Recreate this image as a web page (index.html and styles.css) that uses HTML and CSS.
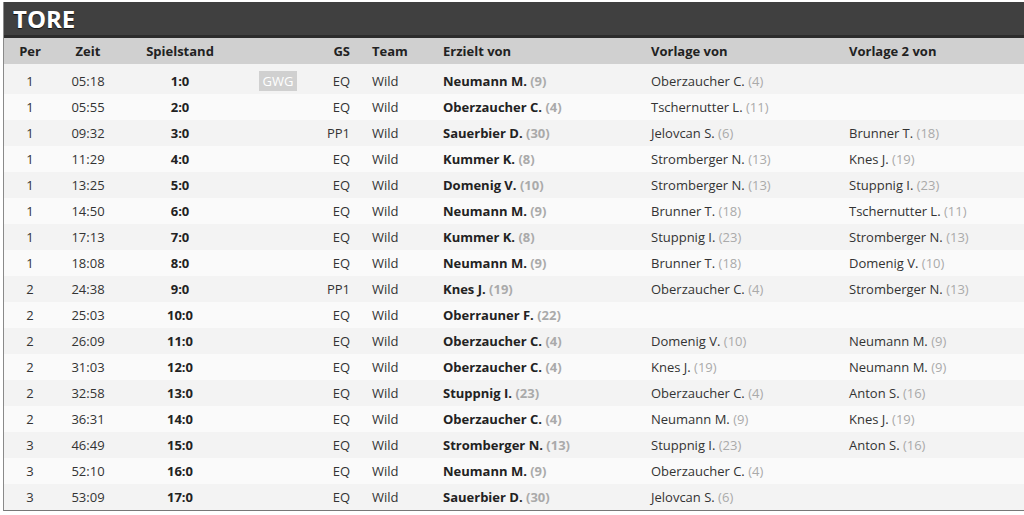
FILE: index.html
```html
<!DOCTYPE html>
<html lang="de">
<head>
<meta charset="utf-8">
<title>Tore</title>
<link rel="stylesheet" href="styles.css">
</head>
<body>
<div class="panel">
  <h2 class="title">TORE</h2>
  <table class="goals">
    <colgroup>
      <col class="c-per"><col class="c-zeit"><col class="c-stand"><col class="c-badge"><col class="c-gs"><col class="c-team"><col class="c-tor"><col class="c-v1"><col class="c-v2">
    </colgroup>
    <thead>
      <tr>
        <th class="ctr">Per</th><th class="ctr">Zeit</th><th class="ctr">Spielstand</th><th></th><th class="rgt">GS</th><th class="team">Team</th><th class="name">Erzielt von</th><th class="name">Vorlage von</th><th class="name">Vorlage 2 von</th>
      </tr>
    </thead>
    <tbody>
      <tr><td class="ctr">1</td><td class="ctr">05:18</td><td class="ctr b">1:0</td><td class="ctr"><span class="badge">GWG</span></td><td class="rgt">EQ</td><td class="team">Wild</td><td class="name b">Neumann M. <span class="n">(9)</span></td><td class="name">Oberzaucher C. <span class="n">(4)</span></td><td class="name"></td></tr>
      <tr><td class="ctr">1</td><td class="ctr">05:55</td><td class="ctr b">2:0</td><td></td><td class="rgt">EQ</td><td class="team">Wild</td><td class="name b">Oberzaucher C. <span class="n">(4)</span></td><td class="name">Tschernutter L. <span class="n">(11)</span></td><td class="name"></td></tr>
      <tr><td class="ctr">1</td><td class="ctr">09:32</td><td class="ctr b">3:0</td><td></td><td class="rgt">PP1</td><td class="team">Wild</td><td class="name b">Sauerbier D. <span class="n">(30)</span></td><td class="name">Jelovcan S. <span class="n">(6)</span></td><td class="name">Brunner T. <span class="n">(18)</span></td></tr>
      <tr><td class="ctr">1</td><td class="ctr">11:29</td><td class="ctr b">4:0</td><td></td><td class="rgt">EQ</td><td class="team">Wild</td><td class="name b">Kummer K. <span class="n">(8)</span></td><td class="name">Stromberger N. <span class="n">(13)</span></td><td class="name">Knes J. <span class="n">(19)</span></td></tr>
      <tr><td class="ctr">1</td><td class="ctr">13:25</td><td class="ctr b">5:0</td><td></td><td class="rgt">EQ</td><td class="team">Wild</td><td class="name b">Domenig V. <span class="n">(10)</span></td><td class="name">Stromberger N. <span class="n">(13)</span></td><td class="name">Stuppnig I. <span class="n">(23)</span></td></tr>
      <tr><td class="ctr">1</td><td class="ctr">14:50</td><td class="ctr b">6:0</td><td></td><td class="rgt">EQ</td><td class="team">Wild</td><td class="name b">Neumann M. <span class="n">(9)</span></td><td class="name">Brunner T. <span class="n">(18)</span></td><td class="name">Tschernutter L. <span class="n">(11)</span></td></tr>
      <tr><td class="ctr">1</td><td class="ctr">17:13</td><td class="ctr b">7:0</td><td></td><td class="rgt">EQ</td><td class="team">Wild</td><td class="name b">Kummer K. <span class="n">(8)</span></td><td class="name">Stuppnig I. <span class="n">(23)</span></td><td class="name">Stromberger N. <span class="n">(13)</span></td></tr>
      <tr><td class="ctr">1</td><td class="ctr">18:08</td><td class="ctr b">8:0</td><td></td><td class="rgt">EQ</td><td class="team">Wild</td><td class="name b">Neumann M. <span class="n">(9)</span></td><td class="name">Brunner T. <span class="n">(18)</span></td><td class="name">Domenig V. <span class="n">(10)</span></td></tr>
      <tr><td class="ctr">2</td><td class="ctr">24:38</td><td class="ctr b">9:0</td><td></td><td class="rgt">PP1</td><td class="team">Wild</td><td class="name b">Knes J. <span class="n">(19)</span></td><td class="name">Oberzaucher C. <span class="n">(4)</span></td><td class="name">Stromberger N. <span class="n">(13)</span></td></tr>
      <tr><td class="ctr">2</td><td class="ctr">25:03</td><td class="ctr b">10:0</td><td></td><td class="rgt">EQ</td><td class="team">Wild</td><td class="name b">Oberrauner F. <span class="n">(22)</span></td><td class="name"></td><td class="name"></td></tr>
      <tr><td class="ctr">2</td><td class="ctr">26:09</td><td class="ctr b">11:0</td><td></td><td class="rgt">EQ</td><td class="team">Wild</td><td class="name b">Oberzaucher C. <span class="n">(4)</span></td><td class="name">Domenig V. <span class="n">(10)</span></td><td class="name">Neumann M. <span class="n">(9)</span></td></tr>
      <tr><td class="ctr">2</td><td class="ctr">31:03</td><td class="ctr b">12:0</td><td></td><td class="rgt">EQ</td><td class="team">Wild</td><td class="name b">Oberzaucher C. <span class="n">(4)</span></td><td class="name">Knes J. <span class="n">(19)</span></td><td class="name">Neumann M. <span class="n">(9)</span></td></tr>
      <tr><td class="ctr">2</td><td class="ctr">32:58</td><td class="ctr b">13:0</td><td></td><td class="rgt">EQ</td><td class="team">Wild</td><td class="name b">Stuppnig I. <span class="n">(23)</span></td><td class="name">Oberzaucher C. <span class="n">(4)</span></td><td class="name">Anton S. <span class="n">(16)</span></td></tr>
      <tr><td class="ctr">2</td><td class="ctr">36:31</td><td class="ctr b">14:0</td><td></td><td class="rgt">EQ</td><td class="team">Wild</td><td class="name b">Oberzaucher C. <span class="n">(4)</span></td><td class="name">Neumann M. <span class="n">(9)</span></td><td class="name">Knes J. <span class="n">(19)</span></td></tr>
      <tr><td class="ctr">3</td><td class="ctr">46:49</td><td class="ctr b">15:0</td><td></td><td class="rgt">EQ</td><td class="team">Wild</td><td class="name b">Stromberger N. <span class="n">(13)</span></td><td class="name">Stuppnig I. <span class="n">(23)</span></td><td class="name">Anton S. <span class="n">(16)</span></td></tr>
      <tr><td class="ctr">3</td><td class="ctr">52:10</td><td class="ctr b">16:0</td><td></td><td class="rgt">EQ</td><td class="team">Wild</td><td class="name b">Neumann M. <span class="n">(9)</span></td><td class="name">Oberzaucher C. <span class="n">(4)</span></td><td class="name"></td></tr>
      <tr><td class="ctr">3</td><td class="ctr">53:09</td><td class="ctr b">17:0</td><td></td><td class="rgt">EQ</td><td class="team">Wild</td><td class="name b">Sauerbier D. <span class="n">(30)</span></td><td class="name">Jelovcan S. <span class="n">(6)</span></td><td class="name"></td></tr>
    </tbody>
  </table>
</div>
</body>
</html>
```
FILE: styles.css
```css
html, body {
  margin: 0;
  padding: 0;
  background: #fff;
  overflow: hidden;
}
body {
  font-family: "Open Sans", "Liberation Sans", sans-serif;
  font-size: 13px;
  color: #333;
}
.panel {
  margin: 2px 0 0 3px;
  width: 1040px;
  border-left: 1px solid #8a8a8a;
  border-bottom: 1px solid #777;
}
.title {
  margin: 0;
  height: 33px;
  line-height: 34px;
  padding-left: 9px;
  background: #404040;
  border-bottom: 3px solid #2c2c2c;
  color: #fff;
  font-size: 24px;
  font-weight: 700;
  text-shadow: 0 1px 1px #111;
}
.goals {
  border-collapse: collapse;
  table-layout: fixed;
  width: 1040px;
}
.c-per { width: 52px; }
.c-zeit { width: 64px; }
.c-stand { width: 120px; }
.c-badge { width: 76px; }
.c-gs { width: 44px; }
.c-team { width: 73px; }
.c-tor { width: 208px; }
.c-v1 { width: 198px; }
.c-v2 { width: auto; }
.goals th {
  height: 26px;
  padding: 0;
  background: #d0d0d0;
  color: #222;
  font-weight: 700;
  border-bottom: 4px solid #f3f3f3;
  white-space: nowrap;
}
.goals td {
  height: 26px;
  padding: 0;
  white-space: nowrap;
}
.goals tbody tr:nth-child(odd) td { background: #f3f3f3; }
.goals tbody tr:nth-child(even) td { background: #fafafa; }
.ctr { text-align: center; }
.rgt { text-align: right; padding-right: 10px !important; }
.team { text-align: left; padding-left: 12px !important; }
.name { text-align: left; padding-left: 10px !important; }
.b { font-weight: 700; color: #222; }
.n { color: #aaa; }
.badge {
  display: inline-block;
  background: #d0d0d0;
  color: #fff;
  font-weight: 400;
  padding: 1px 4px;
  line-height: 18px;
}
```
